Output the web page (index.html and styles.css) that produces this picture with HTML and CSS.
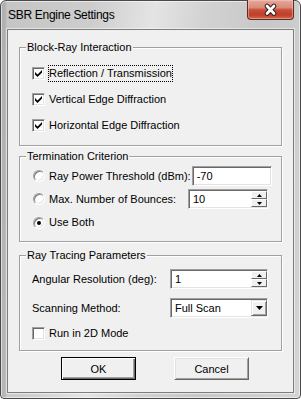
FILE: index.html
```html
<!DOCTYPE html>
<html>
<head>
<meta charset="utf-8">
<title>SBR Engine Settings</title>
<link rel="stylesheet" href="styles.css">
</head>
<body>
<div class="window">
  <div class="titlebar">
    <span class="title">SBR Engine Settings</span>
    <div class="close">
      <svg width="45" height="18" viewBox="0 0 45 18">
        <path d="M19 5 L26 12.5 M26 5 L19 12.5" stroke="#3b2422" stroke-width="4.8" stroke-linecap="round" fill="none"/>
        <path d="M19 5 L26 12.5 M26 5 L19 12.5" stroke="#ffffff" stroke-width="2.6" stroke-linecap="round" fill="none"/>
      </svg>
    </div>
  </div>
  <div class="client">
    <fieldset class="group g1">
      <legend>Block-Ray Interaction</legend>
      <div class="row">
        <span class="check"><svg width="11" height="11" viewBox="0 0 11 11"><polygon points="2,4 2,6.5 4.5,9 9,4.5 9,2 4.5,6.5" fill="#000"/></svg></span>
        <span class="label focus">Reflection / Transmission</span>
      </div>
      <div class="row">
        <span class="check"><svg width="11" height="11" viewBox="0 0 11 11"><polygon points="2,4 2,6.5 4.5,9 9,4.5 9,2 4.5,6.5" fill="#000"/></svg></span>
        <span class="label">Vertical Edge Diffraction</span>
      </div>
      <div class="row">
        <span class="check"><svg width="11" height="11" viewBox="0 0 11 11"><polygon points="2,4 2,6.5 4.5,9 9,4.5 9,2 4.5,6.5" fill="#000"/></svg></span>
        <span class="label">Horizontal Edge Diffraction</span>
      </div>
    </fieldset>

    <fieldset class="group g2">
      <legend>Termination Criterion</legend>
      <div class="row field-row">
        <span class="radio"></span>
        <span class="label">Ray Power Threshold (dBm):</span>
        <div class="field w80"><span class="value">-70</span></div>
      </div>
      <div class="row field-row">
        <span class="radio"></span>
        <span class="label">Max. Number of Bounces:</span>
        <div class="field w80">
          <span class="value">10</span>
          <div class="spin">
            <span class="spin-btn"><svg width="5" height="3" viewBox="0 0 5 3"><polygon points="0,3 5,3 2.5,0" fill="#000"/></svg></span>
            <span class="spin-btn"><svg width="5" height="3" viewBox="0 0 5 3"><polygon points="0,0 5,0 2.5,3" fill="#000"/></svg></span>
          </div>
        </div>
      </div>
      <div class="row">
        <span class="radio"><span class="dot"></span></span>
        <span class="label">Use Both</span>
      </div>
    </fieldset>

    <fieldset class="group g3">
      <legend>Ray Tracing Parameters</legend>
      <div class="row field-row">
        <span class="label plain">Angular Resolution (deg):</span>
        <div class="field w98">
          <span class="value">1</span>
          <div class="spin">
            <span class="spin-btn"><svg width="5" height="3" viewBox="0 0 5 3"><polygon points="0,3 5,3 2.5,0" fill="#000"/></svg></span>
            <span class="spin-btn"><svg width="5" height="3" viewBox="0 0 5 3"><polygon points="0,0 5,0 2.5,3" fill="#000"/></svg></span>
          </div>
        </div>
      </div>
      <div class="row field-row">
        <span class="label plain">Scanning Method:</span>
        <div class="field w98">
          <span class="value">Full Scan</span>
          <span class="drop"><svg width="7" height="4" viewBox="0 0 7 4"><polygon points="0,0 7,0 3.5,4" fill="#000"/></svg></span>
        </div>
      </div>
      <div class="row">
        <span class="check"></span>
        <span class="label">Run in 2D Mode</span>
      </div>
    </fieldset>

    <div class="buttons">
      <div class="btn default">OK</div>
      <div class="btn">Cancel</div>
    </div>
  </div>
</div>
</body>
</html>
```

FILE: styles.css
```css
html, body {
  margin: 0;
  padding: 0;
}

body {
  width: 301px;
  height: 399px;
  overflow: hidden;
  background: #ffffff;
  font-family: "Liberation Sans", Arial, sans-serif;
  font-size: 11px;
  color: #000;
}

.window {
  box-sizing: border-box;
  width: 301px;
  height: 399px;
  display: flex;
  flex-direction: column;
  padding: 0 6px 5px 6px;
  border: 1px solid #4a4a4a;
  border-radius: 6px 6px 4px 4px;
  background:
    linear-gradient(90deg, rgba(0,0,0,0.10) 0, rgba(0,0,0,0.10) 4px, rgba(0,0,0,0) 6px),
    linear-gradient(100deg, #c4c4c4 0%, #cdcdcd 25%, #e4e4e4 42%, #d2d2d2 56%, #c8c8c8 72%, #d2d4d6 100%);
  box-shadow: inset 0 0 0 1px rgba(255,255,255,0.55);
}

.titlebar {
  height: 28px;
  display: flex;
  align-items: flex-start;
  flex: none;
}

.title {
  margin: 7px 0 0 1px;
  font-size: 12px;
  line-height: 14px;
  letter-spacing: -0.3px;
  color: #000;
  white-space: nowrap;
}

.close {
  box-sizing: border-box;
  margin: -1px 0 0 auto;
  width: 47px;
  height: 20px;
  border: 1px solid #5b2a24;
  border-top: none;
  border-radius: 0 0 4px 4px;
  background: linear-gradient(#e6a99c 0%, #d98a78 40%, #c5503b 52%, #c23d2a 78%, #d2694d 100%);
  box-shadow: inset 0 0 0 1px rgba(255,210,200,0.45);
  display: flex;
  align-items: flex-start;
  justify-content: center;
}

.close svg {
  display: block;
  margin-top: 1px;
}

.client {
  flex: 1;
  display: flex;
  flex-direction: column;
  padding: 0 11px;
  background: #f0f0f0;
  border: 1px solid #7d7d7d;
  box-shadow: 0 0 0 1px rgba(255,255,255,0.5);
}

.group {
  margin: 0;
  padding: 0 13px 0 6px;
  border: 1px solid #a0a0a0;
  box-shadow: inset 1px 1px 0 #ffffff, 1px 1px 0 #ffffff;
  display: flex;
  flex-direction: column;
  min-width: 0;
}

.group legend {
  padding: 0 1px;
  font-size: 11px;
  line-height: 13px;
  background: #f0f0f0;
}

.g1 {
  margin-top: 11px;
  padding-top: 11px;
  padding-bottom: 11px;
  gap: 9px;
}

.g2 {
  margin-top: 4px;
  padding-top: 3px;
  padding-bottom: 10px;
}

.g2 .row + .row {
  margin-top: 3px;
}

.g2 .row:last-child {
  margin-top: 5px;
}

.g3 {
  margin-top: 7px;
  padding-top: 7px;
  padding-bottom: 8px;
}

.g3 .row:nth-of-type(2) {
  margin-top: 9px;
}

.g3 .row:nth-of-type(3) {
  margin-top: 7px;
}

.row {
  display: flex;
  align-items: center;
  height: 17px;
  padding-left: 6px;
}

.field-row {
  height: 20px;
}

.label {
  border: 1px solid transparent;
  margin-left: 3px;
  line-height: 15px;
  white-space: nowrap;
  flex: 0 1 auto;
}

.label.plain {
  margin-left: -1px;
}

.label.focus {
  border: 1px dotted #000;
}

.check {
  box-sizing: border-box;
  width: 13px;
  height: 13px;
  flex: none;
  background: #fff;
  border: 1px solid;
  border-color: #a0a0a0 #ffffff #ffffff #a0a0a0;
  box-shadow: inset 1px 1px 0 #696969, inset -1px -1px 0 #e3e3e3;
  display: flex;
  align-items: center;
  justify-content: center;
}

.check svg {
  display: block;
}

.radio {
  box-sizing: border-box;
  width: 12px;
  height: 12px;
  margin-left: 1px;
  flex: none;
  border-radius: 50%;
  background: #fff;
  border: 1px solid;
  border-color: #a0a0a0 #ffffff #ffffff #a0a0a0;
  box-shadow: inset 1px 1px 0 #7a7a7a, inset -1px -1px 0 #e3e3e3;
  display: flex;
  align-items: center;
  justify-content: center;
}

.dot {
  width: 4px;
  height: 4px;
  border-radius: 50%;
  background: #000;
}

.field {
  box-sizing: border-box;
  height: 20px;
  margin-left: auto;
  flex: none;
  display: flex;
  align-items: center;
  background: #fff;
  border: 1px solid;
  border-color: #a0a0a0 #ffffff #ffffff #a0a0a0;
  box-shadow: inset 1px 1px 0 #696969, inset -1px -1px 0 #e3e3e3;
}

.w80 {
  width: 80px;
}

.w98 {
  width: 98px;
}

.value {
  flex: 1;
  padding-left: 4px;
  line-height: 14px;
  white-space: nowrap;
}

.spin {
  width: 16px;
  height: 16px;
  display: flex;
  flex-direction: column;
  flex: none;
}

.spin-btn {
  box-sizing: border-box;
  flex: 1;
  background: #f0f0f0;
  border: 1px solid;
  border-color: #ffffff #696969 #696969 #ffffff;
  display: flex;
  align-items: center;
  justify-content: center;
}

.spin-btn svg {
  display: block;
}

.drop {
  box-sizing: border-box;
  width: 16px;
  height: 16px;
  flex: none;
  background: #f0f0f0;
  border: 1px solid;
  border-color: #e3e3e3 #696969 #696969 #e3e3e3;
  box-shadow: inset 1px 1px 0 #ffffff, inset -1px -1px 0 #a0a0a0;
  display: flex;
  align-items: center;
  justify-content: center;
}

.drop svg {
  display: block;
}

.buttons {
  display: flex;
  margin-top: 6px;
  padding-left: 42px;
  gap: 38px;
}

.btn {
  box-sizing: border-box;
  width: 75px;
  height: 23px;
  display: flex;
  align-items: center;
  justify-content: center;
  background: #f0f0f0;
  border: 1px solid;
  border-color: #ffffff #696969 #696969 #ffffff;
  box-shadow: inset 1px 1px 0 #e3e3e3, inset -1px -1px 0 #a0a0a0;
  line-height: 14px;
}

.btn.default {
  border-color: #000;
  box-shadow: inset 1px 1px 0 #ffffff, inset -1px -1px 0 #696969, inset -2px -2px 0 #a0a0a0;
}
```
